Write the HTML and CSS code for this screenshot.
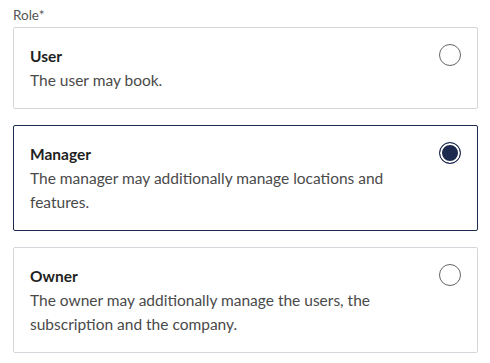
FILE: index.html
```html
<!DOCTYPE html>
<html lang="en">

<head>
    <meta charset="UTF-8">
    <meta name="viewport" content="width=device-width, initial-scale=1.0">
    <title>Role</title>
    <link rel="stylesheet" href="styles.css">
</head>

<body>
    <div class="field">
        <div class="field-label">Role*</div>
        <label class="option">
            <div class="option-text">
                <div class="option-title">User</div>
                <div class="option-desc">The user may book.</div>
            </div>
            <input type="radio" name="role" value="user">
        </label>
        <label class="option selected">
            <div class="option-text">
                <div class="option-title">Manager</div>
                <div class="option-desc">The manager may additionally manage locations and features.</div>
            </div>
            <input type="radio" name="role" value="manager" checked>
        </label>
        <label class="option">
            <div class="option-text">
                <div class="option-title">Owner</div>
                <div class="option-desc">The owner may additionally manage the users, the subscription and the company.</div>
            </div>
            <input type="radio" name="role" value="owner">
        </label>
    </div>

    <script>
        const options = document.querySelectorAll('.option');

        options.forEach(option => {
            option.querySelector('input').addEventListener('change', () => {
                options.forEach(o => o.classList.remove('selected'));
                option.classList.add('selected');
            });
        });
    </script>
</body>

</html>
```
FILE: styles.css
```css
body {
    margin: 0;
    padding: 6px 12px 0 13px;
    background-color: #fff;
    font-family: Lato, "Open Sans", sans-serif;
}

.field {
    display: flex;
    flex-direction: column;
    gap: 16px;
}

.field-label {
    font-size: 13.5px;
    line-height: 18px;
    color: #555;
    margin-bottom: -13px;
}

.option {
    display: flex;
    justify-content: space-between;
    align-items: flex-start;
    gap: 16px;
    padding: 16px;
    border: 1px solid #d3d6db;
    border-radius: 2px;
    cursor: pointer;
}

.option.selected {
    border-color: #1c2a4f;
}

.option-text {
    max-width: 360px;
}

.option-title {
    font-size: 15.5px;
    font-weight: 700;
    line-height: 24px;
    color: #1f1f1f;
}

.option-desc {
    font-size: 15.5px;
    line-height: 24px;
    color: #4a4a4a;
}

.option input {
    appearance: none;
    -webkit-appearance: none;
    flex: none;
    width: 22px;
    height: 22px;
    margin: 0;
    border: 1.5px solid #666;
    border-radius: 50%;
    background-color: #fff;
    cursor: pointer;
}

.option input:checked {
    border-color: #1c2a4f;
    background-color: #1c2a4f;
    box-shadow: inset 0 0 0 2px #fff;
}
```
